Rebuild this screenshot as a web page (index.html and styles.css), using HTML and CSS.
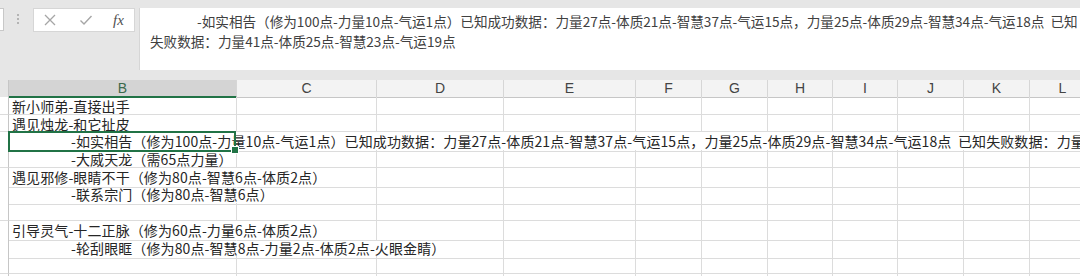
FILE: index.html
```html
<!DOCTYPE html>
<html lang="zh-CN">
<head>
<meta charset="utf-8">
<title>Sheet</title>
<link rel="stylesheet" href="styles.css">
</head>
<body>
<div class="topbar">
  <div class="namebox"></div>
  <div class="grip"><i></i><i></i><i></i></div>
  <div class="fxbtns">
    <svg class="ico" width="14" height="14" viewBox="0 0 14 14"><path d="M2 2 L12 12 M12 2 L2 12" stroke="#a6a6a6" stroke-width="1.3" fill="none"/></svg>
    <svg class="ico" width="14" height="14" viewBox="0 0 14 14"><path d="M1.5 7.5 L5 11 L12.5 3" stroke="#a6a6a6" stroke-width="1.4" fill="none"/></svg>
    <span class="fx">fx</span>
  </div>
  <div class="formula">
    <div class="fline first">-如实相告（修为100点-力量10点-气运1点）已知成功数据：力量27点-体质21点-智慧37点-气运15点，力量25点-体质29点-智慧34点-气运18点&nbsp; 已知</div>
    <div class="fline">失败数据：力量41点-体质25点-智慧23点-气运19点</div>
  </div>
</div>

<div class="sheet">
  <div class="row head">
    <div class="corner"></div>
    <div class="ch sel">B</div><div class="ch">C</div><div class="ch">D</div><div class="ch">E</div><div class="ch">F</div><div class="ch">G</div><div class="ch">H</div><div class="ch">I</div><div class="ch">J</div><div class="ch">K</div><div class="ch">L</div>
  </div>

  <div class="row h18"><div class="rh"></div><div class="c">新小师弟-直接出手</div><div class="c"></div><div class="c"></div><div class="c"></div><div class="c"></div><div class="c"></div><div class="c"></div><div class="c"></div><div class="c"></div><div class="c"></div><div class="c"></div></div>
  <div class="row h17"><div class="rh"></div><div class="c">遇见烛龙-和它扯皮</div><div class="c"></div><div class="c"></div><div class="c"></div><div class="c"></div><div class="c"></div><div class="c"></div><div class="c"></div><div class="c"></div><div class="c"></div><div class="c"></div></div>
  <div class="row h18"><div class="rh"></div><div class="c spill indent active">-如实相告（修为100点-力量10点-气运1点）已知成功数据：力量27点-体质21点-智慧37点-气运15点，力量25点-体质29点-智慧34点-气运18点&nbsp; 已知失败数据：力量41点-体质25点-智慧23点-气运19点</div><div class="c under"></div><div class="c under"></div><div class="c under"></div><div class="c under"></div><div class="c under"></div><div class="c under"></div><div class="c under"></div><div class="c under"></div><div class="c under"></div><div class="c under"></div></div>
  <div class="row h18"><div class="rh"></div><div class="c indent">-大威天龙（需65点力量）</div><div class="c"></div><div class="c"></div><div class="c"></div><div class="c"></div><div class="c"></div><div class="c"></div><div class="c"></div><div class="c"></div><div class="c"></div><div class="c"></div></div>
  <div class="row h17"><div class="rh"></div><div class="c spill">遇见邪修-眼睛不干（修为80点-智慧6点-体质2点）</div><div class="c"></div><div class="c"></div><div class="c"></div><div class="c"></div><div class="c"></div><div class="c"></div><div class="c"></div><div class="c"></div><div class="c"></div><div class="c"></div></div>
  <div class="row h18"><div class="rh"></div><div class="c spill indent">-联系宗门（修为80点-智慧6点）</div><div class="c"></div><div class="c"></div><div class="c"></div><div class="c"></div><div class="c"></div><div class="c"></div><div class="c"></div><div class="c"></div><div class="c"></div><div class="c"></div></div>
  <div class="row h18"><div class="rh"></div><div class="c"></div><div class="c"></div><div class="c"></div><div class="c"></div><div class="c"></div><div class="c"></div><div class="c"></div><div class="c"></div><div class="c"></div><div class="c"></div><div class="c"></div></div>
  <div class="row h18"><div class="rh"></div><div class="c spill">引导灵气-十二正脉（修为60点-力量6点-体质2点）</div><div class="c"></div><div class="c"></div><div class="c"></div><div class="c"></div><div class="c"></div><div class="c"></div><div class="c"></div><div class="c"></div><div class="c"></div><div class="c"></div></div>
  <div class="row h17"><div class="rh"></div><div class="c spill indent">-轮刮眼眶（修为80点-智慧8点-力量2点-体质2点-火眼金睛）</div><div class="c under"></div><div class="c"></div><div class="c"></div><div class="c"></div><div class="c"></div><div class="c"></div><div class="c"></div><div class="c"></div><div class="c"></div><div class="c"></div></div>
  <div class="row h18"><div class="rh"></div><div class="c"></div><div class="c"></div><div class="c"></div><div class="c"></div><div class="c"></div><div class="c"></div><div class="c"></div><div class="c"></div><div class="c"></div><div class="c"></div><div class="c"></div></div>
  <div class="row h18"><div class="rh"></div><div class="c"></div><div class="c"></div><div class="c"></div><div class="c"></div><div class="c"></div><div class="c"></div><div class="c"></div><div class="c"></div><div class="c"></div><div class="c"></div><div class="c"></div></div>
</div>
</body>
</html>
```

FILE: styles.css
```css
* { box-sizing: border-box; }
html, body {
  margin: 0;
  padding: 0;
}
body {
  width: 1080px;
  height: 276px;
  overflow: hidden;
  background: #e6e6e6;
  font-family: "Noto Sans CJK SC", "Noto Sans", sans-serif;
  color: #262626;
}

/* ---------- formula bar ---------- */
.topbar {
  height: 80px;
  display: flex;
  align-items: flex-start;
  padding-top: 8px;
}
.namebox {
  width: 4px;
  height: 23px;
  background: #fff;
  border: 1px solid #c8c8c8;
  border-left: none;
}
.grip {
  margin-left: 13px;
  margin-top: 6px;
  width: 2px;
  display: flex;
  flex-direction: column;
  gap: 2px;
}
.grip i {
  display: block;
  width: 2px;
  height: 2px;
  background: #b4b4b4;
}
.fxbtns {
  margin-left: 14px;
  width: 102px;
  height: 24px;
  background: #fff;
  border: 1px solid #d6d6d6;
  display: flex;
  align-items: center;
  padding-left: 9px;
}
.fxbtns .ico { display: block; }
.fxbtns .ico + .ico { margin-left: 22px; }
.fx {
  margin-left: 20px;
  font-family: "Liberation Serif", "DejaVu Serif", serif;
  font-style: italic;
  font-size: 15px;
  color: #505050;
  line-height: 20px;
}
.formula {
  margin-left: 4px;
  flex: 1;
  height: 62px;
  background: #fff;
  border-left: 1px solid #d6d6d6;
  padding: 3px 0 0 10px;
  overflow: hidden;
}
.fline {
  font-size: 13.6px;
  line-height: 20px;
  white-space: nowrap;
  color: #404040;
}
.fline.first { padding-left: 47px; }

/* ---------- sheet ---------- */
.sheet {
  background: #fff;
  height: 196px;
  overflow: hidden;
}
.row {
  display: grid;
  grid-template-columns: 9px 228px 140px 127px 132px 66px 66px 65px 65px 66px 66px 66px;
  width: 1096px;
}
.h18 { height: 18px; }
.h17 { height: 17px; }

.head {
  height: 17px;
  background: #e6e6e6;
}
.corner {
  border-right: 1px solid #c6c6c6;
  border-bottom: 1px solid #c6c6c6;
}
.ch {
  background: #f3f3f3;
  border-right: 1px solid #d6d6d6;
  border-bottom: 1px solid #c6c6c6;
  font-family: "Liberation Sans", "Noto Sans", sans-serif;
  font-size: 14px;
  line-height: 17px;
  color: #444;
  text-align: center;
}
.ch.sel {
  background: #d4d4d4;
  border-bottom: 2px solid #217346;
  color: #3c6a4c;
  line-height: 16px;
}

.rh {
  background: #fff;
  border-right: 1px solid #c6c6c6;
  border-bottom: 1px solid #dcdcdc;
}
.c {
  border-right: 1px solid #dcdcdc;
  border-bottom: 1px solid #dcdcdc;
  font-size: 14px;
  line-height: 19px;
  letter-spacing: 0.1px;
  padding-left: 3px;
  white-space: nowrap;
  overflow: hidden;
}
.c.indent { padding-left: 62px; }
.c.spill {
  overflow: visible;
  border-right-color: transparent;
}
.c.under { border-right-color: transparent; }

.c.active { position: relative; }
.c.active::after {
  content: "";
  position: absolute;
  left: -1px;
  top: -1px;
  right: 0;
  bottom: -1px;
  border: 2px solid #217346;
}
.c.active::before {
  content: "";
  position: absolute;
  right: -3px;
  bottom: -3px;
  width: 6px;
  height: 6px;
  background: #217346;
  border: 1px solid #fff;
  z-index: 1;
}
```
